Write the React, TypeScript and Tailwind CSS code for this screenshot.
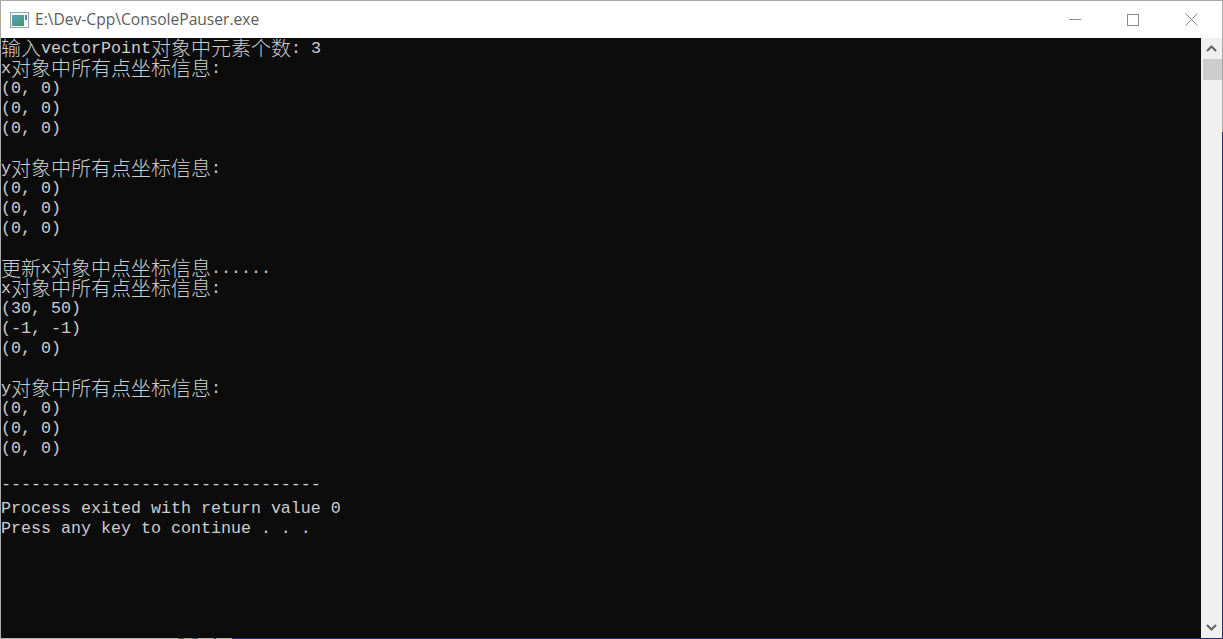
const LINES = [
  "输入vectorPoint对象中元素个数: 3",
  "x对象中所有点坐标信息:",
  "(0, 0)",
  "(0, 0)",
  "(0, 0)",
  "",
  "y对象中所有点坐标信息:",
  "(0, 0)",
  "(0, 0)",
  "(0, 0)",
  "",
  "更新x对象中点坐标信息......",
  "x对象中所有点坐标信息:",
  "(30, 50)",
  "(-1, -1)",
  "(0, 0)",
  "",
  "y对象中所有点坐标信息:",
  "(0, 0)",
  "(0, 0)",
  "(0, 0)",
  "",
  "--------------------------------",
  "Process exited with return value 0",
  "Press any key to continue . . .",
];

function Line({ text }: { text: string }) {
  const runs = text.match(/[\u4e00-\u9fff]+|[^\u4e00-\u9fff]+/g) ?? [];
  const dashes = text.startsWith("---");
  return (
    <div
      className={
        dashes
          ? "h-5 -translate-y-[4px] whitespace-pre pt-px font-['Liberation_Mono',monospace] text-[16.67px] leading-5"
          : "h-5 whitespace-pre pt-px font-['Liberation_Mono',monospace] text-[16.67px] leading-5"
      }
    >
      {runs.map((r, i) =>
        /[\u4e00-\u9fff]/.test(r) ? (
          <span key={i} className="align-[-3px] font-['Noto_Sans_CJK_SC',sans-serif] text-[20px] font-light leading-[0]">
            {r}
          </span>
        ) : (
          <span key={i}>{r}</span>
        ),
      )}
    </div>
  );
}

function AppIcon() {
  return (
    <svg width="20" height="16" viewBox="0 0 20 16" className="shrink-0">
      <defs>
        <linearGradient id="g" x1="0" y1="0" x2="1" y2="1">
          <stop offset="0" stopColor="#5f9fc6" />
          <stop offset="1" stopColor="#3f9a63" />
        </linearGradient>
      </defs>
      <rect x="0.5" y="0.5" width="18" height="15" fill="#f4f6f7" stroke="#9aa3a8" />
      <rect x="2" y="3" width="12" height="11" fill="url(#g)" />
      <rect x="15" y="3" width="2" height="5" fill="#3f8fb0" />
    </svg>
  );
}

export default function App() {
  return (
    <div className="flex h-[639px] w-[1223px] overflow-hidden bg-white">
      <div className="flex w-px shrink-0 flex-col bg-[#a9a9a9]">
        <div className="mt-[13px] h-[15px] bg-[#b9a68c]" />
      </div>
      <div className="flex min-w-0 flex-1 flex-col">
        <div className="h-px shrink-0 bg-[#a9a9a9]" />
        <div className="flex h-[37px] shrink-0 items-center pl-[9px]">
          <AppIcon />
          <span className="ml-[5px] font-['Open_Sans',sans-serif] text-[15.6px] text-[#5c5c5c]">
            E:\Dev-Cpp\ConsolePauser.exe
          </span>
          <div className="ml-auto mr-[2px] flex h-full items-center">
            <div className="flex w-[58px] justify-center">
              <div className="h-px w-3 bg-[#8a8a8a]" />
            </div>
            <div className="flex w-[58px] justify-center">
              <div className="size-3 border border-[#8a8a8a]" />
            </div>
            <div className="flex w-[58px] justify-center">
              <svg width="13" height="13" viewBox="0 0 13 13" stroke="#8a8a8a" fill="none">
                <path d="M0.5 0.5 12.5 12.5M12.5 0.5 0.5 12.5" />
              </svg>
            </div>
          </div>
        </div>
        <div className="flex min-h-0 flex-1">
          <div className="min-w-0 flex-1 overflow-hidden bg-[#0c0c0c] text-[#cccccc]">
            {LINES.map((l, i) => (
              <Line key={i} text={l} />
            ))}
          </div>
          <div className="flex w-[21px] shrink-0 flex-col items-center bg-[#f0f0f0]">
            <div className="flex h-[21px] items-center justify-center">
              <svg width="11" height="7" viewBox="0 0 11 7" fill="none" stroke="#606060" strokeWidth="2">
                <path d="M1 6 5.5 1.5 10 6" />
              </svg>
            </div>
            <div className="ml-px h-[21px] w-[19px] bg-[#cdcdcd]" />
            <div className="mt-auto flex h-[21px] items-center justify-center">
              <svg width="11" height="7" viewBox="0 0 11 7" fill="none" stroke="#606060" strokeWidth="2">
                <path d="M1 1 5.5 5.5 10 1" />
              </svg>
            </div>
          </div>
        </div>
        <div className="flex h-px shrink-0">
          <div className="w-[177px] bg-[#b4b4b4]" />
          <div className="w-[6px] bg-[#5a5648]" />
          <div className="w-[8px] bg-[#a8a8a0]" />
          <div className="w-[6px] bg-[#50606a]" />
          <div className="w-[16px] bg-[#b4b4b4]" />
          <div className="w-[2px] bg-[#3c3c3c]" />
          <div className="w-[16px] bg-[#b4b4b4]" />
          <div className="flex-1 bg-[#2a2a72]" />
        </div>
      </div>
      <div className="flex w-px shrink-0 flex-col">
        <div className="h-[132px] bg-[#a9a9a9]" />
        <div className="flex-1 bg-[#2a2a72]" />
      </div>
    </div>
  );
}
